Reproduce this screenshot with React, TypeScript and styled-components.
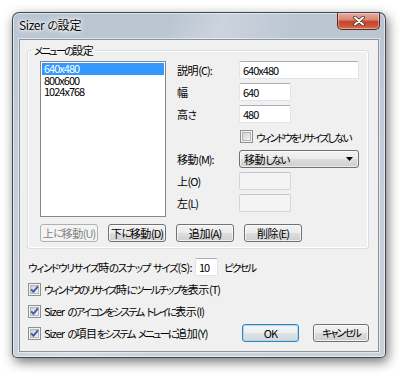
import React from 'react';
import styled, { createGlobalStyle, css } from 'styled-components';

const GlobalStyle = createGlobalStyle`
  html, body { margin: 0; padding: 0; background: #ffffff; }
  body {
    font-family: "Noto Sans CJK JP", "Liberation Sans", sans-serif;
    font-size: 11px;
    color: #000;
    font-feature-settings: "palt";
  }
  * { box-sizing: border-box; }
`;

/* ---------- text runs: narrow UI-font look (kana / latin condensed) ---------- */
type RunKind = 'kana' | 'latin' | 'space' | 'kanji';
const SPACING: Record<RunKind, number> = { kana: -2, latin: -1, space: 0.8, kanji: -0.4 };

const classify = (ch: string): RunKind => {
  const c = ch.codePointAt(0) ?? 0;
  if (ch === ' ') return 'space';
  if (c >= 0x3040 && c <= 0x30ff) return 'kana';
  if (c < 0x2000) return 'latin';
  return 'kanji';
};

const Run = styled.span<{ $kind: RunKind; $scale: number }>`
  letter-spacing: ${(p) => SPACING[p.$kind] * p.$scale}px;
  ${(p) =>
    p.$kind === 'kana' &&
    css`
      font-size: 0.955em;
    `}
`;

const JText = ({ children, scale = 1 }: { children: string; scale?: number }) => {
  const runs: { kind: RunKind; text: string }[] = [];
  for (const ch of Array.from(children)) {
    const kind = classify(ch);
    const last = runs[runs.length - 1];
    if (last && last.kind === kind) last.text += ch;
    else runs.push({ kind, text: ch });
  }
  return (
    <>
      {runs.map((r, i) => (
        <Run key={i} $kind={r.kind} $scale={scale}>
          {r.text}
        </Run>
      ))}
    </>
  );
};

/* ---------- window chrome ---------- */
const Desktop = styled.div`
  width: 400px;
  height: 373px;
  padding: 12px 0 0 12px;
  overflow: hidden;
  background: #ffffff;
`;

const Window = styled.div`
  width: 374px;
  height: 346px;
  border: 1px solid rgba(38, 48, 60, 0.85);
  border-radius: 7px 7px 5px 5px;
  background:
    linear-gradient(115deg, rgba(255,255,255,0) 30%, rgba(255,255,255,0.25) 40%, rgba(255,255,255,0) 55%),
    linear-gradient(180deg, #bac5d2 0%, #c5cdd8 40%, #cad1db 100%);
  box-shadow: 2px 4px 12px rgba(0, 0, 0, 0.55), inset 0 0 0 1px rgba(255, 255, 255, 0.55);
  display: flex;
  flex-direction: column;
  padding: 0 6px 5px 6px;
`;

const TitleBar = styled.div`
  height: 26px;
  margin: 0 -6px;
  padding: 0 5px 0 6px;
  display: flex;
  justify-content: space-between;
  align-items: flex-start;
`;

const TitleText = styled.div`
  margin-top: 4px;
  font-size: 12px;
  line-height: 16px;
  color: #000;
  white-space: nowrap;
  text-shadow: 0 0 6px #fff, 0 0 4px #fff, 0 0 2px #fff;
`;

const CloseButton = styled.div`
  width: 43px;
  height: 17px;
  border: 1px solid #5a2a22;
  border-top: none;
  border-radius: 0 0 5px 5px;
  background: linear-gradient(180deg, #e9a99b 0%, #dc8a78 40%, #c3442b 55%, #cf5a3c 85%, #e07a55 100%);
  box-shadow: inset 0 0 0 1px rgba(255, 255, 255, 0.35);
  display: flex;
  align-items: center;
  justify-content: center;
`;

const Client = styled.div`
  flex: 1;
  background: #f0f0f0;
  border: 1px solid #8a939e;
  box-shadow: 0 0 0 1px rgba(255, 255, 255, 0.5);
  padding: 3px 9px 9px 7px;
  display: flex;
  flex-direction: column;
`;

/* ---------- group box ---------- */
const Group = styled.fieldset`
  margin: 0;
  padding: 0 0 6px 0;
  border: 1px solid #d5dfe5;
  border-radius: 3px;
  box-shadow: inset 0 0 0 1px #ffffff;
  width: 342px;
  min-width: 0;
`;

const Legend = styled.legend`
  margin-left: 4px;
  padding: 0 2px;
  line-height: 14px;
  white-space: nowrap;
`;

const GroupBody = styled.div`
  padding: 3px 0 0 12px;
  display: grid;
  grid-template-columns: 126px 1fr;
  grid-template-rows: 156px 18px;
  column-gap: 11px;
  row-gap: 7px;
`;

const ListBox = styled.div`
  background: #fff;
  border: 1px solid #828790;
  padding: 1px;
`;

const ListItem = styled.div<{ $selected?: boolean }>`
  height: 11.5px;
  line-height: 11.5px;
  padding-left: 2px;
  white-space: nowrap;
  ${(p) =>
    p.$selected &&
    css`
      background: #3399ff;
      color: #fff;
    `}
`;

const Form = styled.div`
  display: grid;
  grid-template-columns: 62px 1fr;
  grid-template-rows: 18px 18px 18px 19px 18px 18px 18px;
  row-gap: 4px;
  align-content: start;
  align-items: center;
`;

const Label = styled.div`
  line-height: 14px;
  white-space: nowrap;
`;

const TextBox = styled.div<{ $width: number; $disabled?: boolean }>`
  width: ${(p) => p.$width}px;
  height: 18px;
  background: ${(p) => (p.$disabled ? '#f4f4f4' : '#ffffff')};
  border: 1px solid ${(p) => (p.$disabled ? '#d3d6d9' : '#e2e3ea')};
  border-top-color: ${(p) => (p.$disabled ? '#c3c6ca' : '#abadb3')};
  border-radius: 2px;
  padding: 0 0 0 3px;
  line-height: 16px;
  white-space: nowrap;
`;

const CheckRow = styled.div<{ $indent?: boolean }>`
  display: flex;
  align-items: center;
  gap: 3px;
  height: 18px;
  white-space: nowrap;
  ${(p) =>
    p.$indent &&
    css`
      grid-column: 2;
      padding-left: 1px;
    `}
`;

const Combo = styled.div`
  width: 120px;
  height: 18px;
  border: 1px solid #707070;
  border-radius: 3px;
  background: linear-gradient(180deg, #f2f2f2 0%, #ebebeb 50%, #dddddd 50%, #cfcfcf 100%);
  box-shadow: inset 0 0 0 1px rgba(255, 255, 255, 0.6);
  display: flex;
  align-items: center;
  justify-content: space-between;
  padding: 0 5px 0 4px;
  white-space: nowrap;
`;

const ButtonRow = styled.div`
  grid-column: 1 / -1;
  display: flex;
  gap: 10px;
`;

const Button = styled.div<{ $width?: number; $disabled?: boolean; $default?: boolean }>`
  width: ${(p) => p.$width ?? 58}px;
  height: 18px;
  border: 1px solid #707070;
  border-radius: 3px;
  background: linear-gradient(180deg, #f2f2f2 0%, #ebebeb 50%, #dddddd 50%, #cfcfcf 100%);
  box-shadow: inset 0 0 0 1px rgba(255, 255, 255, 0.7);
  display: flex;
  align-items: center;
  justify-content: center;
  white-space: nowrap;
  line-height: 14px;
  ${(p) =>
    p.$disabled &&
    css`
      border-color: #adb2b5;
      background: #f4f4f4;
      color: #838383;
      box-shadow: none;
    `}
  ${(p) =>
    p.$default &&
    css`
      border-color: #3c7fb1;
      background: linear-gradient(180deg, #f4f6f8 0%, #eceff1 50%, #dfe3e6 50%, #d3d8dc 100%);
      box-shadow: inset 0 0 0 1px #a6dcf5;
    `}
`;

/* ---------- lower options ---------- */
const Lower = styled.div`
  margin-top: 9px;
  padding-left: 1px;
  display: flex;
  flex-direction: column;
  gap: 4px;
`;

const SnapRow = styled.div`
  display: flex;
  align-items: center;
  height: 18px;
  white-space: nowrap;
`;

const SnapLabel = styled.span`
  width: 167px;
`;

const Unit = styled.span`
  margin-left: 6px;
`;

const LastRow = styled.div`
  display: flex;
  align-items: center;
  justify-content: space-between;
`;

const DialogButtons = styled.div`
  display: flex;
  gap: 14px;
`;

/* ---------- drawings ---------- */
const CheckBox = ({ checked }: { checked?: boolean }) => (
  <svg width="13" height="13" viewBox="0 0 13 13" style={{ flex: 'none' }}>
    <defs>
      <linearGradient id="cbGrad" x1="0" y1="0" x2="1" y2="1">
        <stop offset="0" stopColor="#cbcfd5" />
        <stop offset="1" stopColor="#f7f7f7" />
      </linearGradient>
    </defs>
    <rect x="0.5" y="0.5" width="12" height="12" fill="#f4f4f4" stroke="#8e8f8f" />
    <rect x="2.5" y="2.5" width="8" height="8" fill="url(#cbGrad)" stroke="#b1b5ba" />
    {checked && (
      <path d="M3.2 6.4 L5.4 8.8 L9.9 3.3" fill="none" stroke="#3f5aa5" strokeWidth="1.9" strokeLinejoin="round" />
    )}
  </svg>
);

const CloseGlyph = () => (
  <svg width="12" height="10" viewBox="0 0 12 10">
    <path d="M2 1.5 L10 8.5 M10 1.5 L2 8.5" stroke="#4a2a24" strokeWidth="3.6" strokeLinecap="round" />
    <path d="M2 1.5 L10 8.5 M10 1.5 L2 8.5" stroke="#ffffff" strokeWidth="2" strokeLinecap="round" />
  </svg>
);

const Arrow = () => (
  <svg width="7" height="4" viewBox="0 0 7 4">
    <polygon points="0,0 7,0 3.5,4" fill="#000" />
  </svg>
);

export default function App() {
  return (
    <Desktop>
      <GlobalStyle />
      <Window>
        <TitleBar>
          <TitleText>
            <JText scale={0.4}>Sizer の設定</JText>
          </TitleText>
          <CloseButton>
            <CloseGlyph />
          </CloseButton>
        </TitleBar>
        <Client>
          <Group>
            <Legend>
              <JText>メニューの設定</JText>
            </Legend>
            <GroupBody>
              <ListBox>
                <ListItem $selected>
                  <JText>640x480</JText>
                </ListItem>
                <ListItem>
                  <JText>800x600</JText>
                </ListItem>
                <ListItem>
                  <JText>1024x768</JText>
                </ListItem>
              </ListBox>
              <Form>
                <Label>
                  <JText>説明(C):</JText>
                </Label>
                <TextBox $width={120}>
                  <JText>640x480</JText>
                </TextBox>
                <Label>
                  <JText>幅</JText>
                </Label>
                <TextBox $width={52}>
                  <JText>640</JText>
                </TextBox>
                <Label>
                  <JText>高さ</JText>
                </Label>
                <TextBox $width={52}>
                  <JText>480</JText>
                </TextBox>
                <CheckRow $indent>
                  <CheckBox />
                  <span>
                    <JText>ウィンドウをリサイズしない</JText>
                  </span>
                </CheckRow>
                <Label>
                  <JText>移動(M):</JText>
                </Label>
                <Combo>
                  <span>
                    <JText>移動しない</JText>
                  </span>
                  <Arrow />
                </Combo>
                <Label>
                  <JText>上(O)</JText>
                </Label>
                <TextBox $width={52} $disabled />
                <Label>
                  <JText>左(L)</JText>
                </Label>
                <TextBox $width={52} $disabled />
              </Form>
              <ButtonRow>
                <Button $disabled>
                  <JText>上に移動(U)</JText>
                </Button>
                <Button>
                  <JText>下に移動(D)</JText>
                </Button>
                <Button>
                  <JText>追加(A)</JText>
                </Button>
                <Button>
                  <JText>削除(E)</JText>
                </Button>
              </ButtonRow>
            </GroupBody>
          </Group>
          <Lower>
            <SnapRow>
              <SnapLabel>
                <JText scale={0.65}>ウィンドウリサイズ時のスナップ サイズ(S):</JText>
              </SnapLabel>
              <TextBox $width={23}>
                <JText>10</JText>
              </TextBox>
              <Unit>
                <JText>ピクセル</JText>
              </Unit>
            </SnapRow>
            <CheckRow>
              <CheckBox checked />
              <span>
                <JText>ウィンドウのリサイズ時にツールチップを表示(T)</JText>
              </span>
            </CheckRow>
            <CheckRow>
              <CheckBox checked />
              <span>
                <JText>Sizer のアイコンをシステム トレイに表示(I)</JText>
              </span>
            </CheckRow>
            <LastRow>
              <CheckRow>
                <CheckBox checked />
                <span>
                  <JText>Sizer の項目をシステム メニューに追加(Y)</JText>
                </span>
              </CheckRow>
              <DialogButtons>
                <Button $width={57} $default>
                  <JText>OK</JText>
                </Button>
                <Button $width={56}>
                  <JText>キャンセル</JText>
                </Button>
              </DialogButtons>
            </LastRow>
          </Lower>
        </Client>
      </Window>
    </Desktop>
  );
}
